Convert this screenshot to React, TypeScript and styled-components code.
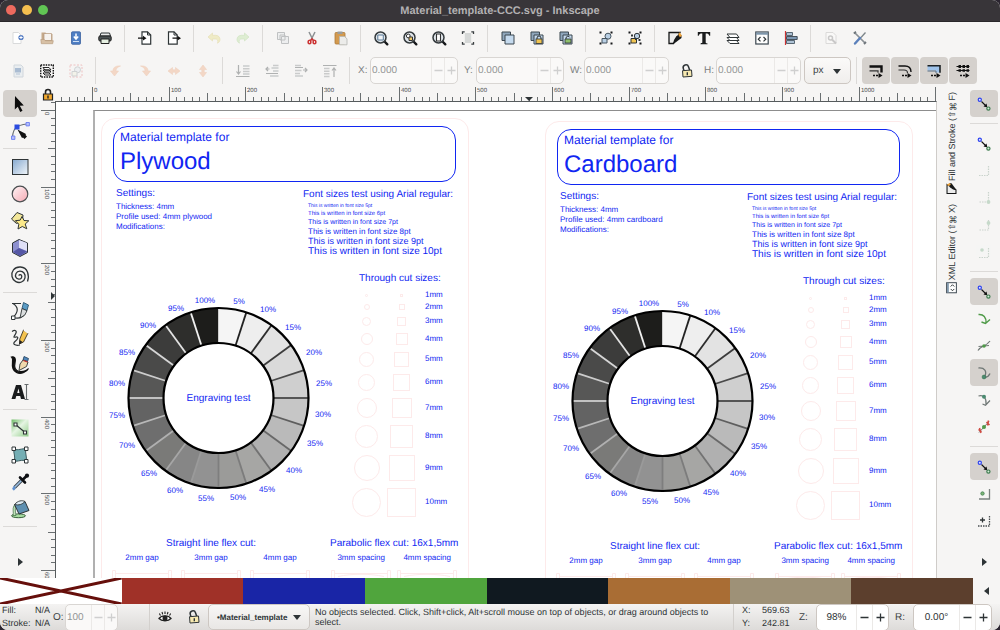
import React, { useLayoutEffect, useRef, useState } from "react";
import styled, { createGlobalStyle, css } from "styled-components";

const Global = createGlobalStyle`
  * { box-sizing: border-box; }
  html, body, #root { height: 100%; }
  body {
    margin: 0;
    background: #2b2530;
    font-family: "Liberation Sans", Arial, "DejaVu Sans", sans-serif;
    font-size: 9px;
    color: #3d4345;
    text-rendering: geometricPrecision;
  }
  button, input, select { font: inherit; color: inherit; text-rendering: inherit; }
`;

/* ------------------------------------------------------------------ shell */

const Window = styled.div`
  display: flex;
  flex-direction: column;
  height: 100%;
  border-radius: 8px;
  overflow: hidden;
  background: #f6f5f4;
`;

const TitleBar = styled.header`
  position: relative;
  display: flex;
  align-items: center;
  justify-content: center;
  flex: none;
  height: 22px;
  background: #383539;
  border-bottom: 1px solid #29272a;
`;

const Lights = styled.div`
  position: absolute;
  left: 6px;
  top: 5px;
  display: flex;
  gap: 6px;
`;

const Light = styled.button<{ $tone: string }>`
  width: 10px;
  height: 10px;
  padding: 0;
  border: 0;
  border-radius: 50%;
  background: ${(p) => p.$tone};
`;

const Title = styled.h1`
  margin: 0;
  font-size: 11px;
  line-height: 14px;
  font-weight: 700;
  color: #b3b1b3;
`;

const Toolbar = styled.div<{ $tall?: boolean }>`
  display: flex;
  align-items: center;
  flex: none;
  height: ${(p) => (p.$tall ? 33 : 32)}px;
  padding-left: 3px;
  overflow: hidden;
`;

const Divider = styled.span`
  flex: none;
  width: 1px;
  height: 27px;
  margin: 0 5px;
  background: #dcdad8;
`;

const ToolButton = styled.button<{ $faded?: boolean }>`
  display: grid;
  place-items: center;
  flex: none;
  width: 29px;
  height: 27px;
  padding: 0;
  border: 0;
  background: none;
  svg { opacity: ${(p) => (p.$faded ? 0.35 : 1)}; }
`;

const LockButton = styled(ToolButton)`
  margin: 0 3px 0 -3px;
`;

const FieldStrip = styled.div`
  display: flex;
  align-items: center;
  flex: none;
  padding-left: 3px;
`;

const ToggleGroup = styled.div`
  display: flex;
  gap: 1px;
`;

const Toggle = styled(ToolButton)`
  width: 28px;
  border-radius: 4px;
  background: #d5d1cd;
`;

const raised = css`
  border: 1px solid #cdc7c2;
  border-radius: 5px;
`;

/* ----------------------------------------------------------- number fields */

const FieldLabel = styled.label<{ $width: number; $dim?: boolean }>`
  flex: none;
  width: ${(p) => p.$width}px;
  color: ${(p) => (p.$dim ? "#7d8182" : "#3d4345")};
  font-size: 10px;
`;

const FieldGroup = styled.div`
  display: flex;
  align-items: center;
  flex: none;
  margin-right: 6px;
`;

const FieldBox = styled.div<{ $width: number; $dim?: boolean }>`
  ${raised}
  display: flex;
  flex: none;
  width: ${(p) => p.$width}px;
  height: 27px;
  background: ${(p) => (p.$dim ? "#faf9f8" : "#ffffff")};
  color: ${(p) => (p.$dim ? "#929595" : "#2e3436")};
  border-color: ${(p) => (p.$dim ? "#d9d6d3" : "#cdc7c2")};
  overflow: hidden;
`;

const FieldInput = styled.input<{ $center?: boolean }>`
  flex: 1;
  min-width: 0;
  padding: 0 1px;
  border: 0;
  background: none;
  font-size: 10px;
  text-align: ${(p) => (p.$center ? "center" : "left")};
  outline: 0;
`;

const Step = styled.button<{ $wide?: boolean; $dim?: boolean }>`
  display: grid;
  place-items: center;
  flex: none;
  width: ${(p) => (p.$wide ? 16 : 13)}px;
  padding: 0;
  border: 0;
  border-left: 1px solid #ebe9e7;
  background: none;
  color: ${(p) => (p.$dim ? "#cfcfcf" : "#2e3436")};
`;

type NumberFieldProps = {
  id: string;
  label: string;
  name: string;
  value: string;
  labelWidth: number;
  width: number;
  dim?: boolean;
  labelDim?: boolean;
  wide?: boolean;
};

function NumberField(p: NumberFieldProps) {
  return (
    <FieldGroup>
      <FieldLabel htmlFor={p.id} $width={p.labelWidth} $dim={p.labelDim}>{p.label}</FieldLabel>
      <FieldBox $width={p.width} $dim={p.dim}>
        <FieldInput id={p.id} defaultValue={p.value} $center={p.wide} />
        <Step $dim={p.dim} $wide={p.wide} aria-label={`Decrease ${p.name}`}>
          <svg width="9" height="9" viewBox="0 0 9 9"><path d="M.5 4.500h8" stroke="currentColor" strokeWidth="1.300" /></svg>
        </Step>
        <Step $dim={p.dim} $wide={p.wide} aria-label={`Increase ${p.name}`}>
          <svg width="9" height="9" viewBox="0 0 9 9"><path d="M.5 4.500h8M4.500 .5v8" stroke="currentColor" strokeWidth="1.300" /></svg>
        </Step>
      </FieldBox>
    </FieldGroup>
  );
}

const SelectWrap = styled.div`
  position: relative;
  flex: none;
  margin-left: -3px;
  svg { position: absolute; right: 10px; top: 10px; pointer-events: none; }
`;

const UnitSelect = styled.select`
  ${raised}
  appearance: none;
  width: 47px;
  height: 27px;
  padding: 0 8px;
  background: linear-gradient(#fbfaf9, #f0eeec);
  font-size: 10px;
`;

/* ------------------------------------------------------------------ icons */

const K = "#2e3436";
const B = "#b9cfe4";

type IconSet = Record<string, React.ReactNode>;

const magnifier = (
  <>
    <path d="M11.500 11.500l2.800 2.800" stroke="#16181a" strokeWidth="2.400" strokeLinecap="round" />
    <circle cx="7.500" cy="7.500" r="5.500" fill="#dfe5ea" stroke="#33393c" strokeWidth="1.500" />
  </>
);
const padlock = (
  <>
    <path d="M8 9.500V8a2 2 0 0 1 4 0v1.500" fill="none" stroke={K} strokeWidth="1" />
    <rect x="7" y="9" width="6" height="4.500" fill="#f0c451" stroke={K} strokeWidth=".8" />
  </>
);
const stacked = (
  <>
    <path d="M2 2h8.500v8.500H2z" fill="#8fa6bb" stroke="#3b464f" />
    <path d="M5 5h9v9H5z" fill="#c5daee" stroke="#3b464f" />
  </>
);
const corners = <path d="M1.500 1.500h2v2h-2zM12.500 1.500h2v2h-2zM1.500 12.500h2v2h-2zM12.500 12.500h2v2h-2z" fill="#16181a" />;
const openLock = (
  <>
    <path d="M5 7.700L4.300 5.500a2.700 2.700 0 0 1 5.200-1.700L10.800 7.500" fill="none" stroke={K} strokeWidth="1.500" />
    <path d="M3.500 7.700l9-.7.5 6.300-9 .7z" fill="#f7e9b0" stroke={K} strokeWidth="1" />
    <path d="M8.300 9.200v3" stroke={K} strokeWidth="1.400" />
  </>
);
const linkNodes = (
  <>
    <path d="M5.500 5.500l5 5" stroke="#111" strokeWidth="1.100" />
    <path d="M11.300 11.300l-3.800-.8 3-3z" fill="#111" />
    <circle cx="3.800" cy="3.800" r="1.600" fill="#dfe3ff" stroke="#2f45f0" strokeWidth="1.200" />
    <circle cx="12.400" cy="12.600" r="1.600" fill="#d5ecd8" stroke="#3f7d50" strokeWidth="1.200" />
  </>
);
const moveArrow = (
  <>
    <path d="M5 12.500h6" stroke="#111" strokeWidth="1.300" strokeDasharray="2 1" />
    <path d="M10.500 10l4 2.500-4 2.500z" fill="#111" />
  </>
);

const icons: IconSet = {
  new: (<>
    <path d="M3 2.500h5.500l2.500 2.500v8.500H3z" fill="#fff" stroke="#d9dadb" />
    <circle cx="11" cy="7.500" r="2.600" fill="#4a74c0" /><path d="M11 5.800v3.400M9.300 7.500h3.400" stroke="#fff" strokeWidth="1" />
  </>),
  open: (<>
    <path d="M2.500 13V2.500h4l1 1.500h6V13z" fill="#c5a98a" />
    <path d="M5 3.500h7.500v7H5z" fill="#f6f2ee" stroke="#b5977a" strokeWidth=".7" />
    <path d="M1.800 9.500h3.500l1 1.200h8l-.6 3H2.300z" fill="#d8c1a6" stroke="#b5977a" strokeWidth=".6" />
  </>),
  save: (<>
    <rect x="3.500" y="1.800" width="9" height="12.500" rx="1" fill="#4f7fc4" stroke="#3c62a0" strokeWidth=".8" />
    <path d="M8 3.500v4.500M5.800 6.500L8 9l2.200-2.500" stroke="#fff" strokeWidth="1.500" fill="none" /><path d="M5 11.500h6" stroke="#cfe0f5" />
  </>),
  print: (<>
    <path d="M4 3h8.500l1 3H3z" fill="#e9eaea" stroke={K} /><rect x="1.800" y="6" width="12.400" height="5" rx="1.200" fill="#4b5254" stroke="#222" />
    <path d="M4 9h8v4.500H4z" fill="#e6f0e2" stroke="#222" />
  </>),
  import: (<>
    <path d="M5 1.800h5.500l3.200 3.200v9.200H5z" fill="#fff" stroke={K} strokeWidth="1.200" /><path d="M10.500 1.800V5h3.200" fill="none" stroke={K} />
    <path d="M1 8.200h5" stroke="#111" strokeWidth="1.300" /><path d="M6 5.800l3.500 2.400L6 10.600z" fill="#111" />
  </>),
  export: (<>
    <path d="M2.500 1.800H8l3.200 3.200v9.200H2.500z" fill="#fff" stroke={K} strokeWidth="1.200" /><path d="M8 1.800V5h3.200" fill="none" stroke={K} />
    <path d="M6.500 8.200h6" stroke="#111" strokeWidth="1.300" /><path d="M11.500 5.800L15 8.200l-3.500 2.400z" fill="#111" />
  </>),
  undo: <path d="M2 7l4.500-4v2.300h3c3 0 4.500 2 4.500 4.200 0 1.700-1 3-2.500 3.700 1-2.700 0-4.200-2.200-4.200H6.500V11z" fill="#ece5a8" stroke="#d9cf86" strokeWidth=".6" opacity=".6" />,
  redo: <path d="M14 7L9.500 3v2.300h-3C3.500 5.300 2 7.300 2 9.500c0 1.700 1 3 2.500 3.700C3.500 10.500 4.500 9 6.700 9h2.800v2z" fill="#cfe8bd" stroke="#b2d69b" strokeWidth=".6" opacity=".6" />,
  copy: (<>
    <path d="M2.500 2.500h7v7h-7z" fill="#dfe3e6" stroke="#5b6266" /><path d="M6.500 6.500h7v7h-7z" fill="#dfe3e6" stroke="#5b6266" /><path d="M5 5h5v5H5z" fill="none" stroke="#5b6266" />
  </>),
  cut: (<>
    <path d="M5 2l4 8M11 2L7 10" stroke="#8b9092" strokeWidth="1.500" />
    <ellipse cx="5.500" cy="12" rx="1.400" ry="1.700" fill="none" stroke="#cc3333" strokeWidth="1.600" /><ellipse cx="10.500" cy="12" rx="1.400" ry="1.700" fill="none" stroke="#cc3333" strokeWidth="1.600" />
    <path d="M6.500 10.500L8 9l1.500 1.500" fill="none" stroke="#cc3333" strokeWidth="1.600" />
  </>),
  paste: (<>
    <rect x="2" y="2.500" width="10" height="11.500" rx="1" fill="#d39a4f" stroke="#ad7a38" strokeWidth=".8" /><path d="M4.500 1.500h5v2.500h-5z" fill="#9a9d9d" />
    <path d="M6.500 6.500h5l2.500 2.300v6H6.500z" fill="#ececea" stroke="#b4b5b3" strokeWidth=".8" />
  </>),
  zoomSel: <>{magnifier}<path d="M4.800 5h5.500v5H4.800z" fill="#f2f5f8" stroke="#5b7a97" strokeWidth="1" /></>,
  zoomDraw: <>{magnifier}<circle cx="6.300" cy="6" r="1.900" fill="#fff" stroke="#333" strokeWidth="1" /><path d="M7 7h3.500v3.500H7z" fill="#f0c96a" stroke="#333" strokeWidth="1" /></>,
  zoomPage: <>{magnifier}<path d="M5.500 4h4v7h-4z" fill="#fff" stroke="#333" strokeWidth="1.100" /></>,
  zoomCenter: (<>
    <path d="M4.800 3h6.400v10H4.800z" fill="#d6d8d7" /><path d="M2.500 4V1.800h2.200M11.300 1.800h2.200V4M2.500 12v2.200h2.200M11.300 14.200h2.200V12" fill="none" stroke="#3a3f41" strokeWidth="1.300" />
  </>),
  dup: stacked,
  clone: <>{stacked}{padlock}</>,
  unlink: <>{stacked}<path d="M8 9.500V8a2 2 0 0 1 3.800-.6" fill="none" stroke={K} /><path d="M7 9h6v4H7z" fill="#8fc06c" stroke={K} strokeWidth=".8" /></>,
  group: <>{corners}<circle cx="10" cy="6.200" r="3" fill={B} stroke="#465560" /><path d="M4 8.500h5V13H4z" fill={B} stroke="#465560" /></>,
  ungroup: <>{corners}<circle cx="10" cy="6" r="2.700" fill={B} stroke={K} /><path d="M4 8.500h5.500V13H4z" fill="#f0c451" stroke={K} /><path d="M8 8.500h1.500V10H8zM11.500 9h2v2h-2zM4 4.500h2v2H4z" fill={K} /></>,
  fill: (<>
    <path d="M2 2.500h11L6.500 13.500H2z" fill="#ececec" stroke="#151617" strokeWidth="1.300" /><path d="M9.500 6l5-1v3L8.500 12.500 6 14l1-4z" fill="#17191a" /><path d="M12.800 2.200l2.200 3.500-2.200 1.500-1.500-2.800z" fill="#eda33c" />
  </>),
  text: <path d="M1.800 2h12.400v3.800h-.9c-.5-2-1.200-2.400-3.600-2.400v8.800c0 .9.400 1.100 1.800 1.200v.8h-7v-.8c1.400-.1 1.800-.3 1.800-1.200V3.400C3.900 3.400 3.200 3.800 2.700 5.800h-.9z" fill="#1a1c1d" />,
  layers: (<>
    <path d="M2 10.500l3 3h9l-2.500-3z" fill="#fff" stroke={K} /><path d="M2 7.500l3 3h9l-2.500-3z" fill="#fff" stroke={K} /><path d="M2 4l3 3.500h9L11.500 4z" fill="#fff" stroke={K} />
  </>),
  xml: (<>
    <rect x="1.800" y="2" width="12.400" height="12" fill="#fff" stroke="#3b464f" strokeWidth="1.200" /><path d="M2 2.500h12v2.200H2z" fill="#7f97ac" /><path d="M6.500 7L4.300 9.200l2.200 2.200M9.500 7l2.200 2.200-2.200 2.200" fill="none" stroke={K} strokeWidth="1.200" />
  </>),
  align: (<>
    <path d="M2.500 1v14" stroke="#c33" strokeWidth="1.200" /><path d="M3.500 2.500h6v3h-6zM3.500 10.500h8v3h-8z" fill="#aec2d5" stroke="#4b5a66" strokeWidth=".9" /><path d="M3.500 6.500h10.700v3H3.500z" fill="#7d98b3" stroke="#3b464f" strokeWidth=".9" />
  </>),
  docprops: (<>
    <path d="M3 2.500h7l3 3v8H3z" fill="#fff" stroke="#aaa" /><circle cx="7.500" cy="8" r="2" fill="none" stroke="#777" strokeWidth="1.500" /><path d="M9 9.500l4 4" stroke="#777" strokeWidth="2" />
  </>),
  prefs: (<>
    <path d="M3 3l10 10" stroke="#8b9196" strokeWidth="1.700" /><path d="M1.800 3.500L4 1.800M12 14l2-2" stroke="#6f767b" strokeWidth="1.800" />
    <path d="M13.500 2.500L9 7.500" stroke="#7d8589" strokeWidth="1.300" /><path d="M8 8L3 13.500" stroke="#5b80bb" strokeWidth="2.400" strokeLinecap="round" />
  </>),
  selAll: (<>
    <path d="M4 2h7l2 2v10H4z" fill="#d3dfea" stroke="#8ea0b1" /><path d="M5 5h6v4.500H5z" fill="#1f5496" /><path d="M6 11h4" stroke="#3f6b9d" />
  </>),
  selLayers: (<>
    <rect x="1.700" y="2" width="12.600" height="12" fill="none" stroke="#111" strokeWidth="1.400" strokeDasharray="1.500 1" />
    <path d="M4 10l2 2h6l-2-2zM4 7l2 2h6l-2-2zM4 4.500L6 7h6l-2-2.500z" fill="#fff" stroke="#111" strokeWidth=".9" />
  </>),
  deselect: (<>
    <rect x="2" y="2" width="12" height="12" fill="none" stroke="#e06666" strokeDasharray="2 1.500" /><circle cx="9.500" cy="6.800" r="3" fill="#dfe6ec" stroke="#8b9398" /><path d="M4 8.500h5V13H4z" fill="#eef0d8" stroke="#8b9398" />
  </>),
  rotL: <path d="M12.500 3C7 2.500 5 5 5 8H2.500L6.500 13l4-5H8c0-2 1-3.800 4.500-5z" fill="#f0a172" stroke="#e3905e" strokeWidth=".6" />,
  rotR: <path d="M3.500 3C9 2.500 11 5 11 8h2.500l-4 5-4-5H8c0-2-1-3.800-4.500-5z" fill="#f0a172" stroke="#e3905e" strokeWidth=".6" />,
  flipH: <path d="M2 8l4.500-3.500v2.300h3V4.500L14 8l-4.500 3.500V9.200h-3v2.300z" fill="#f0a172" stroke="#e3905e" strokeWidth=".6" />,
  flipV: <path d="M8 2l3.500 4.500H9.200v3h2.300L8 14 4.500 9.500h2.300v-3H4.500z" fill="#f0a172" stroke="#e3905e" strokeWidth=".6" />,
  bottom: <><path d="M3.500 2v9M1.500 8.500l2 2.500 2-2.500M1 13.500h13.500" fill="none" stroke={K} strokeWidth="1.200" /><path d="M8 3h6.500M8 5.800h6.500M8 8.500h6.500M8 11h6.500" stroke="#7a8082" strokeWidth="1.500" /></>,
  lower: <><path d="M5.500 6H2M4 4L2 6l2 2M2 10.500h12" fill="none" stroke={K} strokeWidth="1.200" /><path d="M9 2.500h5.500M7.500 5h7M9 8h5.500M6 13h8.500" stroke="#7a8082" strokeWidth="1.500" /></>,
  raise: <><path d="M14 7h-4M12 5l2 2-2 2M2 4.500h8" fill="none" stroke={K} strokeWidth="1.200" /><path d="M2 2.500h6M2 7.500h6.500M2 10.500h5M2 13h8" stroke="#7a8082" strokeWidth="1.500" /></>,
  top: <><path d="M12 14V5M10 7.500L12 5l2 2.500M1 2.500h13.500" fill="none" stroke={K} strokeWidth="1.200" /><path d="M2 5.500h5.500M2 8.200h5.500M2 10.800h5.500M2 13.500h5.500" stroke="#7a8082" strokeWidth="1.500" /></>,
  lock: openLock,
  scaleStroke: (<>
    <path d="M1.500 3.500h12v6" fill="none" stroke="#111" strokeWidth="2.400" /><path d="M1.500 7.800h8.500v2" fill="none" stroke="#333" strokeWidth="1.200" />{moveArrow}
  </>),
  scaleCorner: (<>
    <path d="M1.500 3H8c4 0 6 2.500 6 6" fill="none" stroke="#111" strokeWidth="1.400" /><path d="M1.500 7H7c2.500 0 3.500 1 3.500 3" fill="none" stroke="#333" strokeWidth="1.200" />{moveArrow}
  </>),
  scaleGrad: (<>
    <path d="M1.500 3h12.500v6.500h-4V7.500h-8.500z" fill="#9fc3ea" /><path d="M1.500 2.700H14v7" fill="none" stroke="#1d2225" strokeWidth="1.600" /><path d="M1.500 8H10v2" fill="none" stroke="#5b6f82" strokeWidth="1" />{moveArrow}
  </>),
  scalePattern: (<>
    <path d="M1.500 3.500h13M1.500 7.500h13" stroke="#111" strokeWidth="1.200" /><path d="M3.500 2h2.500v3H3.500zM7.500 2H10v3H7.500zM11.500 2H14v3h-2.500zM3.500 6.200h2.500v2.600H3.500zM7.500 6.200H10v2.600H7.500zM11.500 6.200H14v2.600h-2.500z" fill="#111" />{moveArrow}
  </>),
  eye: (<>
    <path d="M2 9.500C4.500 6 11.500 6 14 9.500c-2.500 3-9.500 3-12 0z" fill="#fff" stroke="#222" strokeWidth="1.300" /><circle cx="8" cy="9" r="2.500" fill="#222" />
    <path d="M3.500 6.500L2.300 4.500M5.700 5.300l-.7-2.300M8 5V2.500M10.300 5.300L11 3M12.500 6.500l1.200-2" stroke="#222" strokeWidth="1.100" />
  </>),
  snap: linkNodes,
  bbEdge: <path d="M12.500 3v9.500H3" fill="none" stroke="#8aa594" strokeWidth="1.200" strokeDasharray="1.500 1" />,
  bbCorner: <><path d="M12.500 2v10H3" fill="none" stroke="#8aa594" strokeWidth="1.200" strokeDasharray="1.500 1" /><circle cx="12.500" cy="12" r="1.900" fill="#7fb08c" /></>,
  bbMid: <><path d="M12.500 3v10H3" fill="none" stroke="#8aa594" strokeWidth="1.200" strokeDasharray="1.500 1" /><circle cx="12.500" cy="6" r="1.900" fill="#7fb08c" /></>,
  bbCenter: <><path d="M12.500 4v9.500H3" fill="none" stroke="#8aa594" strokeWidth="1.200" strokeDasharray="1.500 1" /><circle cx="6" cy="6" r="1.800" fill="#7fb08c" /></>,
  path: <path d="M2.500 3.500c5-.5 8 3 7.500 8.500M5.500 11l4 1.500L14 8.500" fill="none" stroke="#4f9a48" strokeWidth="1.400" />,
  cross: <><path d="M2 12.500C6 6.500 9 9.500 14 3M2.500 8.500L13 7.500" fill="none" stroke="#6f7775" strokeWidth="1.200" /><circle cx="8" cy="8" r="1.800" fill="#4f9a48" /></>,
  cusp: <><path d="M2.500 3c6-.5 9 3 6 9M9 12.500c2.500-.5 4-1.500 5-4" fill="none" stroke="#6f7775" strokeWidth="1.300" /><circle cx="8" cy="12" r="1.900" fill="#4a8a70" stroke="#37734f" strokeWidth=".6" /></>,
  smooth: <><path d="M2.500 4c5-1.500 8 2 7.500 8M6.500 12l3 1.200L14 8.500" fill="none" stroke="#6f7775" strokeWidth="1.200" /><circle cx="8" cy="4.800" r="2" fill="#4a8a70" /></>,
  midline: <><path d="M3 13.500L13 2.500" stroke="#777" /><path d="M2.500 10.500L5.500 13M3.500 9l1.500 5M10.500 3l3 3M11.500 6.500l1-5" stroke="#cf4b42" strokeWidth="1.500" /><circle cx="8" cy="8" r="2" fill="#4f9a48" /></>,
  objCenter: <><path d="M13.500 3v10H3" fill="none" stroke="#7b8280" strokeWidth="1.300" /><circle cx="6.500" cy="7.500" r="1.700" fill="#7fb877" stroke="#3f7d50" strokeWidth=".8" /></>,
  rotCenter: <><path d="M13.500 3v10H2" fill="none" stroke="#4a4f51" strokeWidth="1.300" strokeDasharray="1.500 1" /><path d="M6.500 4.500v5M4 7h5" stroke={K} strokeWidth="1.300" /></>,
};

/* toolbox drawings use a 20 unit grid */
const toolIcons: IconSet = {
  select: <path d="M5 2l8.800 9.500-4 .2 2.700 5-2.300 1.200-2.400-5.200L4.800 15.500z" fill="#0c0c0c" />,
  node: (<>
    <path d="M2.500 16C3 8 6 4 17 3" fill="none" stroke="#6a6f72" strokeWidth="1.200" /><path d="M1.500 15h3.400v3.400H1.500zM16 1.500h3.400v3.400H16z" fill="#b5c0fb" stroke="#6b7cf0" strokeWidth=".9" />
    <path d="M4.500 3.500h5v5h-5z" fill="#2a4be0" /><path d="M7.500 8.500l8.500 4.500-.5 1 1.500 1.500-2.500 2.500-1.500-1.500-1 .5z" fill="#111" />
  </>),
  rect: <><defs><linearGradient id="gr" x1="0" y1="0" x2="1" y2="1"><stop offset="0" stopColor="#86a9cf" /><stop offset="1" stopColor="#f2f6fa" /></linearGradient></defs><rect x="2.500" y="2.500" width="15.500" height="15" fill="url(#gr)" stroke={K} /></>,
  ellipse: <><defs><linearGradient id="ge" x1="0" y1="0" x2="1" y2="1"><stop offset="0" stopColor="#fff5f6" /><stop offset="1" stopColor="#f5a9b3" /></linearGradient></defs><circle cx="10" cy="10" r="7.800" fill="url(#ge)" stroke="#4b4f51" strokeWidth="1.200" /></>,
  star: (<>
    <path d="M7 1.500l6 2.500-.5 6-6 2.500L1.500 8z" fill="#f3e79a" stroke={K} /><path d="M12 5.500l2 4 4.800.3-3.600 3.200 1.600 4.800-4.500-2.300L8 18l.8-4.800-3.500-3.500 4.800-.5z" fill="#fbe98a" stroke={K} />
  </>),
  box: (<>
    <path d="M2.500 5l6.500-3.500 8.500 3.500v9.500L10 18.500l-7.500-4z" fill="#8d90cf" stroke={K} /><path d="M9 2l8 3v8L9 10z" fill="#dfe0f6" /><path d="M3 14l6-4 8 3.500-7 4.500z" fill="#5557a5" />
  </>),
  spiral: <path d="M17.500 16.500c2-6 .5-14-7-14.500C4 1.600 1 7 2 11.500c1 5 6 7 9.500 5.500 4-1.700 4.500-6.500 2.500-9C12 5.500 7.500 5.500 6 8.500c-1.300 2.800 0 5.500 2.800 5.700 2.200.1 3.600-2 2.700-3.800-.8-1.300-2.500-1-2.500.3" fill="none" stroke={K} strokeWidth="1.300" />,
  pen: (<>
    <path d="M2 2.500h9M3 2.500c6 4 5 8 1 13" fill="none" stroke={K} strokeWidth="1.200" /><path d="M1.500 15h3.500v3.500H1.500z" fill="#fff" stroke={K} /><path d="M5 17c4 .5 8-1 9.500-4" fill="none" stroke={K} strokeWidth="1.200" />
    <path d="M13.500 1.500l5 2.500-1.500 5.500-5-2z" fill="#5b9bc4" stroke="#204a65" strokeWidth=".8" /><path d="M12 7.500l5 2.200-2.200 4.300L10 17z" fill="#d9dcdd" stroke={K} strokeWidth=".9" />
  </>),
  pencil: (<>
    <path d="M2 3.500c3-2 5.500-1 3.500 2.500S3 9.500 6 9s2 2-1 4.500 0 4.500 5 3.500" fill="none" stroke={K} strokeWidth="1.200" />
    <path d="M13.500 2l4.500 3-4.500 9-4 2 .3-5z" fill="#f4c34f" stroke="#3a3226" strokeWidth=".9" /><path d="M9.600 12l3 2-3.500 2.500z" fill="#222" /><path d="M14 2l4 3" stroke="#fff" strokeWidth="1.500" />
  </>),
  calligraphy: (<>
    <path d="M1.500 2c3.500-1 4.500 2 3.500 6s0 8 4.500 8.500 8-1.500 9-3c-2 4-8 6-12 4S2 11 2.500 7 2.500 3 1.500 2z" fill="#111" stroke="#111" strokeWidth="1.200" />
    <path d="M14 1.500l4.500 2-1 3-4.500-1.500z" fill="#4f86ba" stroke="#1f3b57" strokeWidth=".8" /><path d="M13 5l5 2-1.500 4.500L9 15.500l1-6.500z" fill="#f0d9ac" stroke={K} strokeWidth=".9" /><path d="M13.500 5.500l4 1.500" stroke="#c33" strokeWidth="1.300" />
  </>),
  text: (<>
    <path d="M1.500 17L6 3h5l4 14h-4l-.8-3H6.300l-.9 3zM7.200 11h2.300L8.500 6.500z" fill="#1a1c1d" /><path d="M14.500 2.500h4M16.500 2.500v15M14.500 17.500h4" stroke="#666b6d" strokeWidth="1.100" fill="none" />
  </>),
  gradient: (<>
    <defs><linearGradient id="gg" x1="0" y1="0" x2="1" y2="1"><stop offset="0" stopColor="#6fbd67" /><stop offset=".45" stopColor="#e6f5e3" /><stop offset="1" stopColor="#8fcb88" /></linearGradient></defs>
    <rect x="1.500" y="1.500" width="17" height="17" fill="url(#gg)" /><path d="M5.500 6.500l9 7.500" stroke={K} strokeWidth="1.200" /><path d="M4 5h3v3H4zM13.500 13h3v3h-3z" fill="#fff" stroke={K} strokeWidth="1.100" />
  </>),
  mesh: (<>
    <path d="M4 4c4 2 8-1 12 0-1.500 4 1.500 8 0 12-4-2-8 1-12 0 2-4-1-8 0-12z" fill="#74aeb4" stroke="#3d5c60" /><path d="M2 2h3.500v3.500H2zM14.500 2H18v3.500h-3.500zM2 14.500h3.500V18H2zM14.500 14.500H18V18h-3.500z" fill="#fff" stroke={K} />
  </>),
  dropper: (<>
    <path d="M11.500 8.500l-7 7" stroke="#3b4650" strokeWidth="3.200" /><path d="M11.500 8.500l-7 7" stroke="#9dbfe0" strokeWidth="1.600" /><path d="M4 14.500c-1.200 1.500-1.500 2.300-1 3s2 .5 2-1z" fill="#5b8ed0" stroke="#5b8ed0" /><path d="M10 5.500l5 5M12.500 8L17 3.500" stroke="#0d0f12" strokeWidth="2.600" strokeLinecap="round" /><circle cx="17" cy="3.700" r="2.100" fill="#0d0f12" />
  </>),
  bucket: (<>
    <ellipse cx="8.500" cy="16.800" rx="7" ry="1.900" fill="#a7dba0" stroke="#2b5330" strokeWidth=".9" /><path d="M4 6.500c-2 4 0 7-1 10h3c-.5-3-1-6-.3-9z" fill="#bfe3b8" stroke="#3f6b45" strokeWidth=".7" />
    <path d="M4.500 5.500L15 2.500l4 9-10 3.500z" fill="#5d8fb0" stroke={K} /><path d="M4.500 5.500C8 1.500 12 1 15 2.500c-3 3-6 4-10.500 3z" fill="#dbe9f2" stroke={K} strokeWidth=".9" />
  </>),
};

function Icon({ name }: { name: string }) {
  return <svg width="16" height="16" viewBox="0 0 16 16" aria-hidden="true">{icons[name]}</svg>;
}
function ToolIcon({ name }: { name: string }) {
  return <svg width="20" height="20" viewBox="0 0 20 20" aria-hidden="true">{toolIcons[name]}</svg>;
}
function Caret({ dir = "down" }: { dir?: "down" | "left" | "right" }) {
  const d = { down: "M0 2h8L4 7z", left: "M6 0v8L1 4z", right: "M2 0v8l5-4z" }[dir];
  return <svg width="8" height="8" viewBox="0 0 8 8" aria-hidden="true"><path d={d} fill={K} /></svg>;
}

/* --------------------------------------------------------------- workspace */

const Workspace = styled.main`
  display: flex;
  flex: 1;
  min-height: 0;
`;

const SideBar = styled.nav<{ $width: number }>`
  display: flex;
  flex-direction: column;
  align-items: center;
  flex: none;
  width: ${(p) => p.$width}px;
  padding: 3px 0;
  overflow: hidden;
`;

const SideButton = styled.button<{ $width: number; $active?: boolean; $faded?: boolean }>`
  display: grid;
  place-items: center;
  flex: none;
  width: ${(p) => p.$width}px;
  height: 27px;
  padding: 0;
  border: 0;
  border-radius: 4px;
  background: ${(p) => (p.$active ? "#d5d1cd" : "none")};
  svg { opacity: ${(p) => (p.$faded ? 0.4 : 1)}; }
`;

const SideRule = styled.span<{ $width: number; $space: number }>`
  flex: none;
  width: ${(p) => p.$width}px;
  height: 1px;
  margin: ${(p) => p.$space}px 0;
  background: #dcdad8;
`;

const SideMore = styled(SideButton)`
  margin-top: auto;
`;

const Stage = styled.section`
  display: grid;
  grid-template-columns: 15px minmax(0, 1fr);
  grid-template-rows: 14px minmax(0, 1fr);
  flex: 1;
  min-width: 0;
`;

const GuideLock = styled.button`
  display: grid;
  place-items: center;
  padding: 0;
  border: 0;
  background: none;
`;

const Scale = styled.svg`
  display: block;
  overflow: hidden;
  font-size: 6px;
`;

const Canvas = styled.div`
  position: relative;
  overflow: hidden;
  background: #fff;
  border-left: 1px solid #565b5d;
  border-top: 1px solid #565b5d;
  border-right: 1px solid #cfccc9;
`;

const Page = styled.div`
  position: absolute;
  left: 37px;
  top: 8px;
  right: 0;
  bottom: 0;
  border-left: 2px solid #b0b0b0;
  border-top: 1px solid #8d8d8d;
`;

const UNIT = 76.65;
const range = (n: number) => Array.from({ length: n }, (_, i) => i);

/* The rulers draw as many ticks and labels as fit in their own length. */
function useLength(axis: "width" | "height") {
  const ref = useRef<SVGSVGElement>(null);
  const [length, setLength] = useState(0);
  useLayoutEffect(() => {
    const node = ref.current;
    if (!node) return;
    const read = () => setLength(node.getBoundingClientRect()[axis]);
    read();
    const observer = new ResizeObserver(read);
    observer.observe(node);
    return () => observer.disconnect();
  }, [axis]);
  return [ref, length] as const;
}

const labelCount = (length: number) => Math.max(0, Math.ceil((length - 54) / UNIT));

function HorizontalRuler() {
  const [ref, length] = useLength("width");
  return (
    <Scale ref={ref} width="100%" height="14" aria-hidden="true">
      {range(Math.ceil((length * 10) / UNIT)).map((n) => {
        const i = n - 4;
        const x = Math.round(38 + (i * UNIT) / 10) - 0.5;
        const h = i % 10 === 0 ? 14 : i % 5 === 0 ? 8 : 4;
        return <path key={i} d={`M${x} 14v-${h}`} stroke="#6a6f71" />;
      })}
      {range(labelCount(length)).map((k) => (
        <text key={k} x={Math.round(39 + k * UNIT)} y="5" fill="#4b5052">{k * 100}</text>
      ))}
      <path d="M470 10h8l-4 4z" fill={K} />
    </Scale>
  );
}

function VerticalRuler() {
  const [ref, length] = useLength("height");
  return (
    <Scale ref={ref} width="15" height="100%" aria-hidden="true">
      {range(Math.ceil((length * 10) / UNIT)).map((i) => {
        const n = i - 1;
        const y = Math.round(10 + (n * UNIT) / 10) - 0.5;
        const w = n % 10 === 0 ? 14 : n % 5 === 0 ? 7 : 4;
        return <path key={n} d={`M15 ${y}h-${w}`} stroke="#6a6f71" />;
      })}
      {range(labelCount(length) + 1).map((k) => (
        <text key={k} transform={`translate(5 ${Math.round(11 + k * UNIT)}) rotate(90)`} fill="#4b5052">{k * 100}</text>
      ))}
      <path d="M11 191v8l4-4z" fill={K} />
    </Scale>
  );
}

/* ----------------------------------------------------- material templates */

const INK = "#1026f2";
const CUT = "#fdeaea";

const Card = styled.article<{ $x: number; $y: number }>`
  position: absolute;
  left: ${(p) => p.$x}px;
  top: ${(p) => p.$y}px;
  width: 368px;
  height: 520px;
  padding-top: 7px;
  border: 1px solid ${CUT};
  border-radius: 14px;
  color: ${INK};
`;

const TitleBox = styled.div`
  height: 56px;
  margin: 0 12px 0 11px;
  padding: 2px 6px;
  border: 1px solid ${INK};
  border-radius: 14px;
`;

const Kicker = styled.p`
  margin: 0;
  font-size: 12px;
  line-height: 16px;
`;

const Material = styled.h2`
  margin: 0;
  padding-top: 2px;
  font-size: 24px;
  line-height: 30px;
  font-weight: 400;
`;

const Heading = styled.h3`
  margin: 0;
  font-size: 10px;
  line-height: 12px;
  font-weight: 400;
  white-space: nowrap;
`;

const Small = styled.p`
  margin: 0;
  font-size: 8px;
  line-height: 10px;
  white-space: nowrap;
`;

const InfoRow = styled.div`
  display: flex;
  justify-content: space-between;
  padding: 6px 11px 0 14px;
`;

const SettingsBlock = styled.section`
  ${Heading} { margin-bottom: 2px; }
`;

const FontBlock = styled.section`
  width: 154px;
  padding-top: 1px;
  ${Heading} { margin-bottom: 2px; }
`;

const Sample = styled.p<{ $size: number; $line: number }>`
  margin: 0;
  padding-left: 5px;
  font-size: ${(p) => p.$size}px;
  line-height: ${(p) => p.$line}px;
  white-space: nowrap;
`;

const TestRow = styled.div`
  display: flex;
  padding: 15px 0 0 3px;
`;

const Wheel = styled.svg`
  flex: none;
  margin: 19px 14px 0 0;
  overflow: visible;
`;

const CutBlock = styled.section`
  ${Heading} { margin: 0 0 5px 10px; }
`;

const CutRow = styled.div<{ $size: number }>`
  display: grid;
  grid-template-columns: 35px 35px auto;
  justify-items: center;
  align-items: center;
  height: ${(p) => p.$size + 7}px;
  ${Small} { justify-self: start; padding-left: 6px; }
`;

const CutMark = styled.span<{ $size: number; $round?: boolean }>`
  width: ${(p) => p.$size}px;
  height: ${(p) => p.$size}px;
  border: 1px solid ${CUT};
  border-radius: ${(p) => (p.$round ? "50%" : "0")};
`;

const FlexRow = styled.div`
  display: flex;
  gap: 20px;
  padding: 18px 0 0 10px;
`;

const FlexGroup = styled.section`
  display: flex;
  flex-direction: column;
  align-items: center;
  gap: 3px;
`;

const FlexColumns = styled.div<{ $gap: number }>`
  display: flex;
  gap: ${(p) => p.$gap}px;
`;

const FlexColumn = styled.div`
  display: flex;
  flex-direction: column;
  align-items: center;
  gap: 7px;
  width: 60px;
`;

const WEDGES = [
  "#f5f5f5", "#eeeeee", "#e3e3e3", "#dadada", "#cfcfcf", "#c6c6c6", "#bababa", "#b0b0b0", "#a6a6a4", "#9b9b99",
  "#929292", "#868686", "#7a7a78", "#6e6e6e", "#636363", "#575756", "#4a4a49", "#3c3c3b", "#2e2e2c", "#1d1d1b",
];
const SPOKES = [
  "#d0d0d0", "#222", "#2c2c2c", "#3c3c3c", "#4a4a4a", "#555", "#5e5e5e", "#686868", "#727272", "#7c7c7c",
  "#7e7e7e", "#9a9a9a", "#a6a6a6", "#b0b0b0", "#b8b8b8", "#c2c2c2", "#cccccc", "#d6d6d6", "#e2e2e2", "#f0f0f0",
];
const PERCENT_SPOTS: [number, number][] = [
  [134, 9], [163, 17], [188, 35], [209, 60], [219, 91], [218, 122], [210, 151], [189, 178], [162, 197], [133, 205],
  [101, 206], [70, 198], [44, 181], [22, 153], [12, 123], [12, 91], [22, 60], [43, 33], [71, 16], [100, 8],
];

function EngravingWheel() {
  const cx = 113.5;
  const cy = 106;
  const at = (r: number, k: number) => {
    const a = (k * Math.PI) / 10;
    return `${(cx + r * Math.sin(a)).toFixed(2)} ${(cy - r * Math.cos(a)).toFixed(2)}`;
  };
  return (
    <Wheel width="230" height="214" viewBox="0 0 230 214" textAnchor="middle" fontSize="8" fill={INK}>
      {WEDGES.map((c, k) => (
        <path key={c} d={`M${at(55, k)}L${at(90, k)}A90 90 0 0 1 ${at(90, k + 1)}L${at(55, k + 1)}A55 55 0 0 0 ${at(55, k)}z`} fill={c} />
      ))}
      {SPOKES.map((c, k) => (
        <path key={k} d={`M${at(55, k)}L${at(90, k)}`} stroke={c} strokeWidth={k === 0 ? 1 : 1.8} />
      ))}
      <circle cx={cx} cy={cy} r="90" fill="none" stroke="#000" strokeWidth="2.200" />
      <circle cx={cx} cy={cy} r="55" fill="none" stroke="#000" strokeWidth="2.200" />
      {PERCENT_SPOTS.map(([x, y], k) => (
        <text key={k} x={x} y={y + 3}>{(k + 1) * 5}%</text>
      ))}
      <text x={cx} y={cy + 3} fontSize="10">Engraving test</text>
    </Wheel>
  );
}

const MARKS = [3, 6, 9, 12, 15, 17, 20, 23, 26, 29];
const SAMPLES = [[5, 7], [6, 8], [7, 9], [8, 9], [9, 10], [10, 12]];

function SlotFrame({ curved }: { curved?: boolean }) {
  return (
    <svg width="60" height="40" viewBox="0 0 60 40" fill="none" stroke={CUT} aria-hidden="true">
      <path d="M.5 40V.5h3V40M56.500 40V.5h3V40" />
      <path d={curved ? "M3.500 3.500h53M7 6.500c14-3 32-3 46 0" : "M3.500 3.500h53"} />
    </svg>
  );
}

function TemplateCard({ x, y, material, profile }: { x: number; y: number; material: string; profile: string }) {
  return (
    <Card $x={x} $y={y}>
      <TitleBox>
        <Kicker>Material template for</Kicker>
        <Material>{material}</Material>
      </TitleBox>
      <InfoRow>
        <SettingsBlock>
          <Heading>Settings:</Heading>
          <Small>Thickness: 4mm</Small>
          <Small>Profile used: 4mm {profile}</Small>
          <Small>Modifications:</Small>
        </SettingsBlock>
        <FontBlock>
          <Heading>Font sizes test using Arial regular:</Heading>
          {SAMPLES.map(([size, line]) => (
            <Sample key={size} $size={size} $line={line}>This is written in font size {size}pt</Sample>
          ))}
        </FontBlock>
      </InfoRow>
      <TestRow>
        <EngravingWheel />
        <CutBlock>
          <Heading>Through cut sizes:</Heading>
          {MARKS.map((m, i) => (
            <CutRow key={m} $size={m}>
              <CutMark $size={m} $round />
              <CutMark $size={m} />
              <Small>{i + 1}mm</Small>
            </CutRow>
          ))}
        </CutBlock>
      </TestRow>
      <FlexRow>
        <FlexGroup>
          <Heading>Straight line flex cut:</Heading>
          <FlexColumns $gap={9}>
            {["2mm gap", "3mm gap", "4mm gap"].map((t) => (
              <FlexColumn key={t}><Small>{t}</Small><SlotFrame /></FlexColumn>
            ))}
          </FlexColumns>
        </FlexGroup>
        <FlexGroup>
          <Heading>Parabolic flex cut: 16x1,5mm</Heading>
          <FlexColumns $gap={6}>
            {["3mm spacing", "4mm spacing"].map((t) => (
              <FlexColumn key={t}><Small>{t}</Small><SlotFrame curved /></FlexColumn>
            ))}
          </FlexColumns>
        </FlexGroup>
      </FlexRow>
    </Card>
  );
}

/* -------------------------------------------------------------------- dock */

const Dock = styled.aside`
  display: flex;
  flex-direction: column;
  align-items: center;
  gap: 9px;
  flex: none;
  width: 30px;
  padding-top: 5px;
`;

const DockTab = styled.button`
  display: flex;
  align-items: center;
  gap: 1px;
  padding: 0;
  border: 0;
  background: none;
  writing-mode: vertical-rl;
  transform: rotate(180deg);
  font-size: 9px;
  line-height: 14px;
  color: #2e3436;
  white-space: nowrap;
  svg { width: 13px; height: 13px; transform: rotate(90deg); }
`;

/* ----------------------------------------------------------------- palette */

const Palette = styled.div`
  display: flex;
  flex: none;
  height: 26px;
`;

const Swatch = styled.button<{ $tone: string }>`
  flex: 1;
  min-width: 0;
  padding: 0;
  border: 0;
  background: ${(p) => p.$tone};
  overflow: hidden;
  svg { display: block; width: 100%; height: 100%; }
`;

const PaletteMenu = styled.button`
  display: grid;
  place-items: center;
  flex: none;
  width: 27px;
  padding: 0;
  border: 0;
  background: none;
`;

/* -------------------------------------------------------------- status bar */

const StatusBar = styled.footer`
  display: flex;
  align-items: center;
  flex: none;
  height: 26px;
  padding: 0 2px;
  background: linear-gradient(#f4f3f2, #dddbd9);
`;

const Pair = styled.dl<{ $label: number }>`
  display: grid;
  grid-template-columns: ${(p) => p.$label}px auto;
  flex: none;
  margin: 0;
  line-height: 13px;
  color: #2e3436;
  dt, dd { margin: 0; }
`;

const StyleInfo = styled(Pair)`
  width: 51px;
`;

const Coords = styled(Pair)`
  width: 57px;
`;

const StatusRule = styled.span`
  flex: none;
  width: 1px;
  height: 26px;
  background: #d3d0cd;
`;

const LeadRule = styled(StatusRule)`
  margin-left: 25px;
`;

const LayerButton = styled.button`
  ${raised}
  display: flex;
  align-items: center;
  justify-content: space-between;
  flex: none;
  width: 102px;
  height: 26px;
  padding: 0 8px;
  background: linear-gradient(#f8f7f6, #e9e7e5);
  font-size: 8px;
  font-weight: 700;
  color: #2e3436;
`;

const Message = styled.p`
  flex: 1;
  min-width: 0;
  margin: 0 4px 0 5px;
  line-height: 10px;
  color: #2e3436;
`;

const CoordRule = styled(StatusRule)`
  margin-right: 8px;
`;

/* --------------------------------------------------------------------- app */

const COMMANDS: [string, string, boolean?][][] = [
  [["new", "New"], ["open", "Open"], ["save", "Save"], ["print", "Print"]],
  [["import", "Import"], ["export", "Export"]],
  [["undo", "Undo"], ["redo", "Redo"]],
  [["copy", "Copy", true], ["cut", "Cut"], ["paste", "Paste"]],
  [["zoomSel", "Zoom selection"], ["zoomDraw", "Zoom drawing"], ["zoomPage", "Zoom page"], ["zoomCenter", "Center page"]],
  [["dup", "Duplicate"], ["clone", "Clone"], ["unlink", "Unlink clone"]],
  [["group", "Group"], ["ungroup", "Ungroup"]],
  [["fill", "Fill and stroke"], ["text", "Text and font"], ["layers", "Layers"], ["xml", "XML editor"], ["align", "Align"]],
  [["docprops", "Document properties", true], ["prefs", "Preferences"]],
];

const CONTROLS: [string, string, boolean?][][] = [
  [["selAll", "Select all", true], ["selLayers", "Select all in all layers"], ["deselect", "Deselect", true]],
  [["rotL", "Rotate left", true], ["rotR", "Rotate right", true], ["flipH", "Flip horizontal", true], ["flipV", "Flip vertical", true]],
  [["bottom", "Lower to bottom", true], ["lower", "Lower", true], ["raise", "Raise", true], ["top", "Raise to top", true]],
];

const TOOLS = [
  ["select", "node"],
  ["rect", "ellipse", "star", "box", "spiral"],
  ["pen", "pencil", "calligraphy", "text"],
  ["gradient", "mesh", "dropper", "bucket"],
  [],
];

const SNAPS: [string, boolean?, boolean?][][] = [
  [["snap", true]],
  [["snap"], ["bbEdge", false, true], ["bbCorner", false, true], ["bbMid", false, true], ["bbCenter", false, true]],
  [["snap", true], ["path"], ["cross"], ["cusp", true], ["smooth"], ["midline"]],
  [["snap", true], ["objCenter"], ["rotCenter"]],
];

const SWATCHES = ["#a03128", "#1925a6", "#50a53d", "#101920", "#a96d34", "#9e9177", "#5c3f2d"];

export default function App() {
  return (
    <Window>
      <Global />
      <TitleBar>
        <Lights>
          <Light $tone="#ee6a5e" aria-label="Close" />
          <Light $tone="#f5bf4f" aria-label="Minimize" />
          <Light $tone="#61c554" aria-label="Zoom" />
        </Lights>
        <Title>Material_template-CCC.svg - Inkscape</Title>
      </TitleBar>

      <Toolbar>
        {COMMANDS.map((group, g) => (
          <React.Fragment key={g}>
            {g > 0 && <Divider />}
            {group.map(([icon, label, faded]) => (
              <ToolButton key={icon} aria-label={label} $faded={faded}><Icon name={icon} /></ToolButton>
            ))}
          </React.Fragment>
        ))}
      </Toolbar>

      <Toolbar $tall>
        {CONTROLS.map((group, g) => (
          <React.Fragment key={g}>
            {group.map(([icon, label, faded]) => (
              <ToolButton key={icon} aria-label={label} $faded={faded}><Icon name={icon} /></ToolButton>
            ))}
            <Divider />
          </React.Fragment>
        ))}
        <FieldStrip>
          <NumberField id="pos-x" label="X:" name="X" value="0.000" labelWidth={12} width={88} dim labelDim />
          <NumberField id="pos-y" label="Y:" name="Y" value="0.000" labelWidth={12} width={88} dim labelDim />
          <NumberField id="size-w" label="W:" name="width" value="0.000" labelWidth={14} width={85} dim labelDim />
          <LockButton aria-label="Lock proportions"><Icon name="lock" /></LockButton>
          <NumberField id="size-h" label="H:" name="height" value="0.000" labelWidth={12} width={85} dim labelDim />
        </FieldStrip>
        <SelectWrap>
          <UnitSelect aria-label="Unit" defaultValue="px">
            <option>px</option>
            <option>mm</option>
          </UnitSelect>
          <Caret />
        </SelectWrap>
        <Divider />
        <ToggleGroup>
          <Toggle aria-label="Scale stroke width"><Icon name="scaleStroke" /></Toggle>
          <Toggle aria-label="Scale rounded corners"><Icon name="scaleCorner" /></Toggle>
          <Toggle aria-label="Move gradients"><Icon name="scaleGrad" /></Toggle>
          <Toggle aria-label="Move patterns"><Icon name="scalePattern" /></Toggle>
        </ToggleGroup>
      </Toolbar>

      <Workspace>
        <SideBar $width={40}>
          {TOOLS.map((group, g) => (
            <React.Fragment key={g}>
              {g > 0 && <SideRule $width={34} $space={4} />}
              {group.map((t) => (
                <SideButton key={t} $width={34} $active={t === "select"} aria-label={`${t} tool`}><ToolIcon name={t} /></SideButton>
              ))}
            </React.Fragment>
          ))}
          <SideMore $width={34} aria-label="More tools"><Caret dir="right" /></SideMore>
        </SideBar>

        <Stage>
          <GuideLock aria-label="Lock guides">
            <svg width="12" height="13" viewBox="0 0 12 13"><path d="M3.500 6V4a2.500 2.500 0 0 1 5 0v2" fill="none" stroke="#222" strokeWidth="1.600" /><path d="M1.500 6h9v6h-9z" fill="#f0a830" stroke="#222" strokeWidth="1.200" /><path d="M6 7.500v3" stroke="#222" strokeWidth="1.400" /></svg>
          </GuideLock>
          <HorizontalRuler />
          <VerticalRuler />
          <Canvas>
            <Page />
            <TemplateCard x={45} y={16} material="Plywood" profile="plywood" />
            <TemplateCard x={489} y={19} material="Cardboard" profile="cardboard" />
          </Canvas>
        </Stage>

        <Dock>
          <DockTab><Icon name="fill" />Fill and Stroke (⇧⌘F)</DockTab>
          <DockTab><Icon name="xml" />XML Editor (⇧⌘X)</DockTab>
        </Dock>

        <SideBar $width={33}>
          {SNAPS.map((group, g) => (
            <React.Fragment key={g}>
              {g > 0 && <SideRule $width={28} $space={6} />}
              {group.map(([icon, active, faded], i) => (
                <SideButton key={i} $width={28} $active={active} $faded={faded} aria-label={`Snap option ${icon}`}><Icon name={icon} /></SideButton>
              ))}
            </React.Fragment>
          ))}
          <SideMore $width={28} aria-label="More snap options"><Caret dir="right" /></SideMore>
        </SideBar>
      </Workspace>

      <Palette>
        <Swatch $tone="#ffffff" aria-label="No colour">
          <svg viewBox="0 0 122 26" preserveAspectRatio="none"><path d="M0 0l122 26M0 26L122 0" stroke="#660f0b" strokeWidth="3" /></svg>
        </Swatch>
        {SWATCHES.map((tone) => <Swatch key={tone} $tone={tone} aria-label={`Colour ${tone}`} />)}
        <PaletteMenu aria-label="Palette menu"><Caret dir="left" /></PaletteMenu>
      </Palette>

      <StatusBar>
        <StyleInfo $label={33}>
          <dt>Fill:</dt><dd>N/A</dd>
          <dt>Stroke:</dt><dd>N/A</dd>
        </StyleInfo>
        <NumberField id="opacity" label="O:" name="opacity" value="100" labelWidth={12} width={53} dim />
        <LeadRule />
        <ToolButton aria-label="Toggle layer visibility"><Icon name="eye" /></ToolButton>
        <ToolButton aria-label="Toggle layer lock"><Icon name="lock" /></ToolButton>
        <LayerButton>•Material_template<Caret /></LayerButton>
        <Message>No objects selected. Click, Shift+click, Alt+scroll mouse on top of objects, or drag around objects to select.</Message>
        <CoordRule />
        <Coords $label={20}>
          <dt>X:</dt><dd>569.63</dd>
          <dt>Y:</dt><dd>242.81</dd>
        </Coords>
        <NumberField id="zoom" label="Z:" name="zoom" value="98%" labelWidth={17} width={73} wide />
        <NumberField id="rotation" label="R:" name="rotation" value="0.00°" labelWidth={18} width={79} wide />
      </StatusBar>
    </Window>
  );
}
